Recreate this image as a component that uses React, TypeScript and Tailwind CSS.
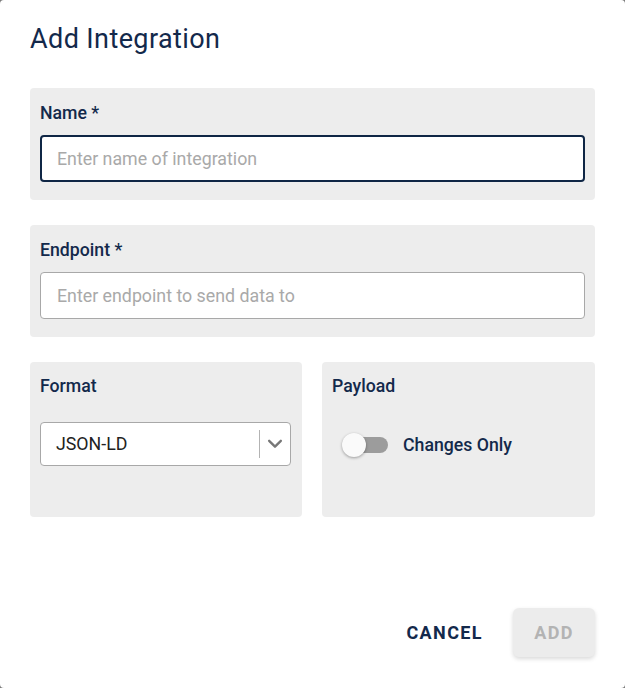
import { useState } from 'react';

const navy = 'text-[#13294b]';

export default function App() {
  const [changesOnly, setChangesOnly] = useState(false);

  return (
    <div className="w-[625px] h-[688px] bg-[#7a7a7a]" style={{ fontFamily: 'Roboto, "Liberation Sans", sans-serif' }}>
      <div className="w-full h-full bg-white rounded-[4px] flex flex-col px-[30px]">
        {/* Title */}
        <h2 className={`pt-[21px] text-[27px] leading-[36px] font-normal tracking-[0.4px] ${navy}`}>
          Add Integration
        </h2>

        {/* Name */}
        <div className="mt-[31px] bg-[#ededed] rounded-[4px] px-[10px] pt-[13px] pb-[18px]">
          <label className={`block text-[17.7px] leading-[24px] font-medium ${navy}`}>Name *</label>
          <input
            autoFocus
            placeholder="Enter name of integration"
            className="mt-[10px] w-full h-[47px] bg-white rounded-[4px] border-2 border-[#0f2645] px-[15px] text-[17.8px] text-[#222] placeholder:text-[#a9a9a9] outline-none"
          />
        </div>

        {/* Endpoint */}
        <div className="mt-[25px] bg-[#ededed] rounded-[4px] px-[10px] pt-[13px] pb-[18px]">
          <label className={`block text-[17.7px] leading-[24px] font-medium ${navy}`}>Endpoint *</label>
          <input
            placeholder="Enter endpoint to send data to"
            className="mt-[10px] w-full h-[47px] bg-white rounded-[4px] border border-[#a8a8a8] px-[16px] text-[17.8px] text-[#222] placeholder:text-[#a9a9a9] outline-none"
          />
        </div>

        {/* Format + Payload */}
        <div className="mt-[25px] grid grid-cols-[272px_273px] gap-[20px]">
          <div className="h-[155px] bg-[#ededed] rounded-[4px] px-[10px] pt-[12px]">
            <label className={`block text-[17.7px] leading-[24px] font-medium ${navy}`}>Format</label>
            <div className="mt-[24px] h-[44px] w-[251px] bg-white rounded-[4px] border border-[#a8a8a8] flex items-center">
              <span className="flex-1 pl-[15px] text-[17.8px] text-[#222]">JSON-LD</span>
              <span className="w-px h-[28px] bg-[#b3b3b3]" />
              <span className="w-[30px] flex items-center justify-center text-[#777]">
                <svg width="18" height="18" viewBox="0 0 20 20">
                  <path d="M3.5 6.5 L10 13 L16.5 6.5" fill="none" stroke="currentColor" strokeWidth="2.6" strokeLinecap="round" strokeLinejoin="round" />
                </svg>
              </span>
            </div>
          </div>

          <div className="h-[155px] bg-[#ededed] rounded-[4px] px-[10px] pt-[12px]">
            <label className={`block text-[17.7px] leading-[24px] font-medium ${navy}`}>Payload</label>
            <div className="mt-[34px] flex items-center">
              <button
                onClick={() => setChangesOnly(!changesOnly)}
                className="relative ml-[10px] w-[46px] h-[24px] flex items-center"
              >
                <span className="absolute left-[10px] right-0 h-[16px] rounded-full bg-[#9c9c9c]" />
                <span className="absolute left-0 top-0 w-[24px] h-[24px] rounded-full bg-[#fafafa] shadow-[0_1px_3px_rgba(0,0,0,0.35)]" />
              </button>
              <span className={`ml-[15px] text-[17.7px] font-medium ${navy}`}>Changes Only</span>
            </div>
          </div>
        </div>

        {/* Actions */}
        <div className="mt-auto mb-[31px] flex items-center justify-end">
          <button className={`text-[18px] font-bold tracking-[1.4px] ${navy} mr-[30px]`}>CANCEL</button>
          <button
            disabled
            className="w-[82px] h-[49px] rounded-[6px] bg-[#ececec] shadow-[0_2px_4px_rgba(0,0,0,0.15)] text-[18px] font-bold tracking-[1.4px] text-[#b3b3b3]"
          >
            ADD
          </button>
        </div>
      </div>
    </div>
  );
}
